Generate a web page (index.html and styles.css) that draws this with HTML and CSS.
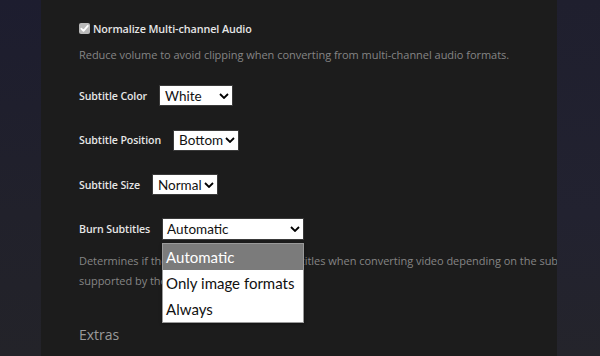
FILE: index.html
```html
<!DOCTYPE html>
<html>
<head>
<meta charset="utf-8">
<link rel="stylesheet" href="styles.css">
</head>
<body>
<div class="layout">
  <div class="side-left"></div>
  <main class="panel">
    <div class="check-row">
      <span class="checkbox"><svg viewBox="0 0 11 11" width="11" height="11"><path d="M2.3 5.6 L4.5 7.9 L8.8 2.9" fill="none" stroke="#fff" stroke-width="1.8" stroke-linecap="round" stroke-linejoin="round"/></svg></span>
      <span class="check-label">Normalize Multi-channel Audio</span>
    </div>
    <p class="desc desc-first">Reduce volume to avoid clipping when converting from multi-channel audio formats.</p>

    <div class="field">
      <span class="label">Subtitle Color</span>
      <span class="select w-color">White<svg class="chev" viewBox="0 0 10 6" width="10" height="6"><path d="M1 1 L5 5 L9 1" fill="none" stroke="#000" stroke-width="1.8"/></svg></span>
    </div>
    <div class="field">
      <span class="label">Subtitle Position</span>
      <span class="select w-pos">Bottom<svg class="chev" viewBox="0 0 10 6" width="10" height="6"><path d="M1 1 L5 5 L9 1" fill="none" stroke="#000" stroke-width="1.8"/></svg></span>
    </div>
    <div class="field">
      <span class="label">Subtitle Size</span>
      <span class="select w-size">Normal<svg class="chev" viewBox="0 0 10 6" width="10" height="6"><path d="M1 1 L5 5 L9 1" fill="none" stroke="#000" stroke-width="1.8"/></svg></span>
    </div>
    <div class="field field-burn">
      <span class="label">Burn Subtitles</span>
      <span class="select-wrap">
        <span class="select w-burn">Automatic<svg class="chev" viewBox="0 0 10 6" width="10" height="6"><path d="M1 1 L5 5 L9 1" fill="none" stroke="#000" stroke-width="1.8"/></svg></span>
        <div class="dropdown">
          <div class="opt active">Automatic</div>
          <div class="opt">Only image formats</div>
          <div class="opt">Always</div>
        </div>
      </span>
    </div>
    <p class="desc desc-burn">Determines if the server should burn in subtitles when converting video depending on the subtitles format, if they are not<br>supported by the player.</p>

    <h2 class="section">Extras</h2>
  </main>
  <div class="side-right"></div>
</div>
</body>
</html>
```

FILE: styles.css
```css
html, body {
  margin: 0;
  padding: 0;
  height: 100%;
  background: #1c1c1c;
}
body {
  font-family: "Open Sans", "Noto Sans", sans-serif;
  overflow: hidden;
}
.layout {
  display: flex;
  height: 356px;
}
.side-left {
  width: 41px;
  flex: none;
  background: linear-gradient(180deg, #1d1d2f 0%, #21212b 60%, #232329 100%);
}
.side-right {
  flex: 1;
  background: linear-gradient(180deg, #1f1f2e 0%, #222230 60%, #24242b 100%);
}
.panel {
  width: 516px;
  flex: none;
  background: #1c1c1c;
  padding: 20px 0 0 38px;
  box-sizing: border-box;
  overflow: hidden;
}
.check-row {
  display: flex;
  align-items: center;
  gap: 3px;
  height: 16px;
}
.checkbox {
  width: 11px;
  height: 11px;
  border-radius: 2px;
  background: #b9b9b9;
  display: flex;
}
.check-label {
  font-size: 10.8px;
  font-weight: 600;
  color: #e6e6e6;
  letter-spacing: -0.1px;
}
.desc {
  margin: 0;
  font-size: 11px;
  color: #858585;
  white-space: nowrap;
  letter-spacing: -0.03px;
}
.desc-first {
  margin-top: 11px;
  line-height: 16px;
}
.field {
  display: flex;
  align-items: center;
  gap: 12px;
  height: 21px;
}
.desc-first + .field {
  margin-top: 22px;
}
.field + .field {
  margin-top: 23.5px;
}
.label {
  font-size: 10.6px;
  font-weight: 600;
  color: #e6e6e6;
  letter-spacing: -0.1px;
}
.select {
  box-sizing: border-box;
  height: 21px;
  background: #fff;
  border: 1px solid #3a3a3a;
  color: #111;
  font-family: Lato, "Open Sans", sans-serif;
  font-size: 13.5px;
  display: flex;
  align-items: center;
  justify-content: space-between;
  padding: 0 3px 0 5px;
}
.chev { flex: none; }
.w-color { width: 74px; }
.w-pos { width: 66px; }
.w-size { width: 66px; }
.w-burn { width: 142px; height: 22px; padding-left: 4px; }
.select-wrap {
  position: relative;
  display: block;
}
.dropdown {
  position: absolute;
  left: 0;
  top: 25px;
  width: 142px;
  box-sizing: border-box;
  background: #fff;
  border: 1px solid #9a9a9a;
  box-shadow: 0 1px 3px rgba(0,0,0,0.4);
  z-index: 5;
}
.opt {
  height: 26px;
  line-height: 26px;
  padding-left: 3px;
  font-family: Lato, "Open Sans", sans-serif;
  font-size: 15px;
  color: #111;
}
.opt.active {
  background: #7b7b7b;
  color: #fff;
}
.desc-burn {
  margin-top: 11px;
  line-height: 20px;
}
.section {
  margin: 34px 0 0;
  font-size: 14px;
  font-weight: 400;
  color: #9a9a9a;
}
```
